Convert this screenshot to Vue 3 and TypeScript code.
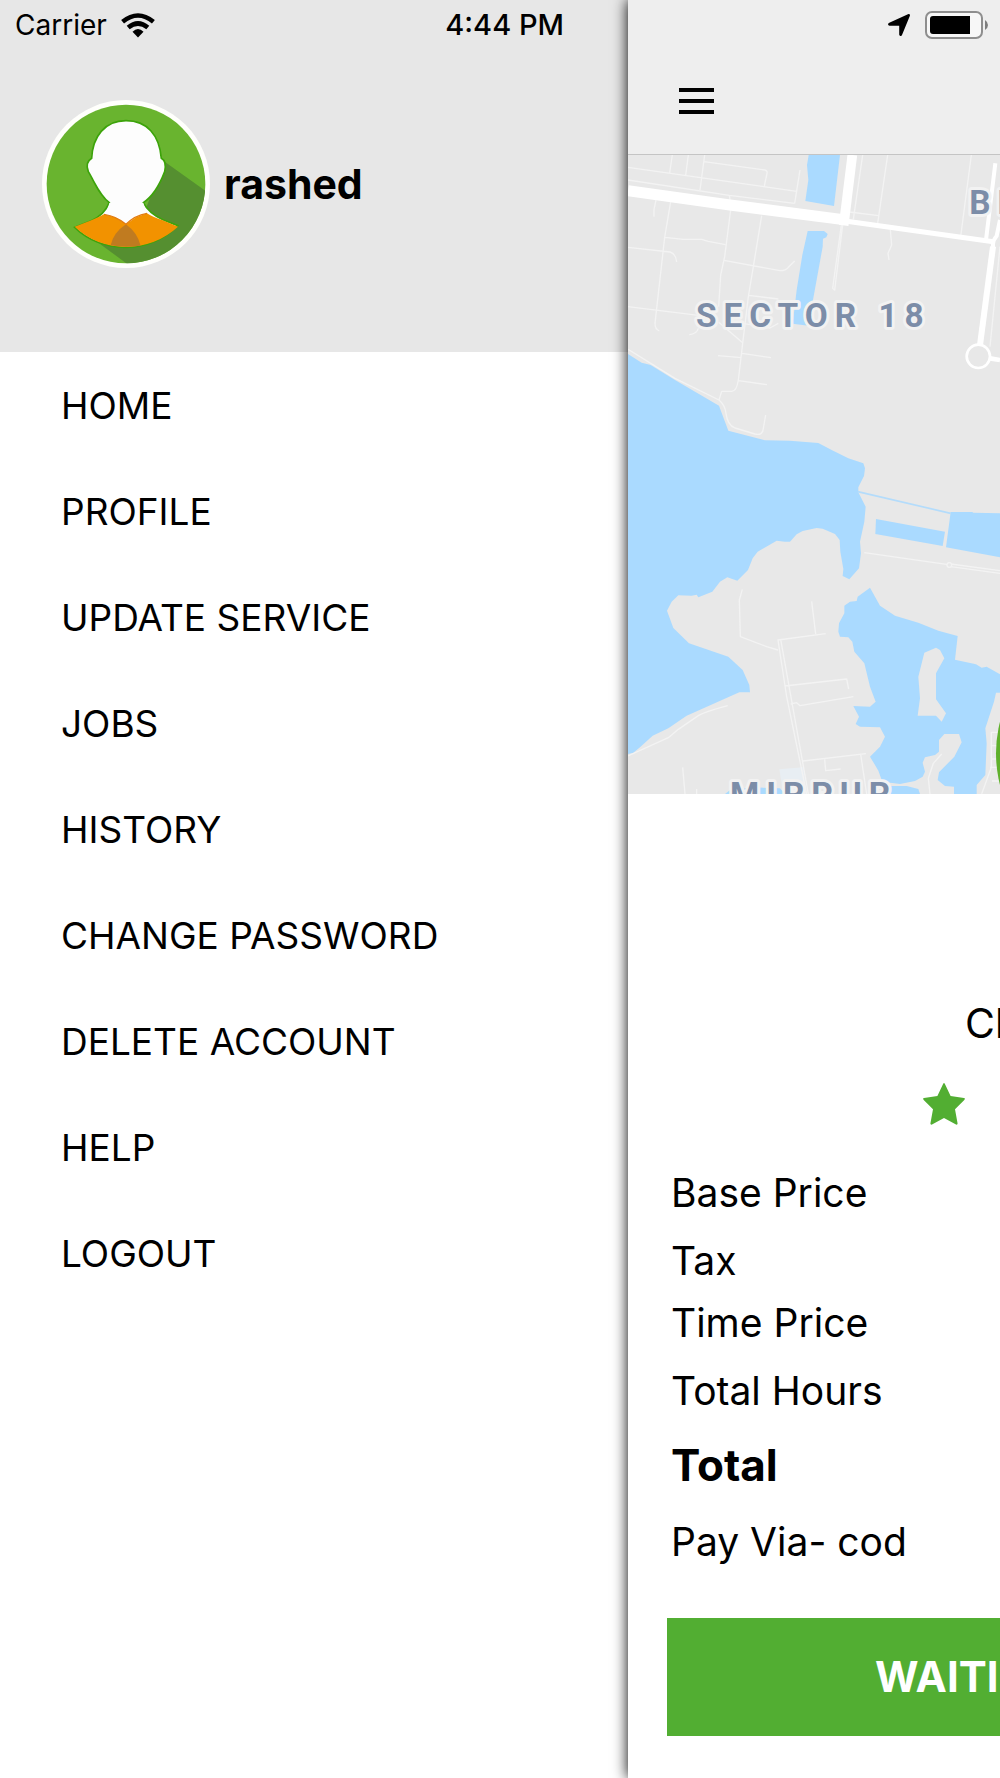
<script setup lang="ts">
interface MenuItem {
  label: string
  href: string
}

const menu: MenuItem[] = [
  { label: 'HOME', href: '#home' },
  { label: 'PROFILE', href: '#profile' },
  { label: 'UPDATE SERVICE', href: '#update-service' },
  { label: 'JOBS', href: '#jobs' },
  { label: 'HISTORY', href: '#history' },
  { label: 'CHANGE PASSWORD', href: '#change-password' },
  { label: 'DELETE ACCOUNT', href: '#delete-account' },
  { label: 'HELP', href: '#help' },
  { label: 'LOGOUT', href: '#logout' },
]

const priceGroups: string[][] = [
  ['Base Price', 'Tax'],
  ['Time Price', 'Total Hours'],
]

// Minor streets of the map, thin light strokes
const lanes: string[] = [
  'M24 52 530 124M24 90 328 136 524 160M540 60 524 160M252 35 435 60Q444 62 440 75L433 108M157 15 149 68M205 15 197 76M254 15 240 120M328 136 330 150',
  'M108 150 102 178V200M152 155 134 262 105 520Q105 538 118 543M24 292 150 306Q168 312 170 336M24 470 235 496M135 262 190 268H245L265 274 316 284M332 180 314 320 302 375 296 470',
  'M425 197 400 350 385 440 368 580 355 690Q350 724 335 724H305L297 750M312 331 480 362Q498 362 505 352L524 333M387 436 475 447M294 617 364 623M366 610 453 623M356 692 441 704',
  'M296 517 368 578M366 520 410 527 450 534 475 520M235 535Q230 552 208 554M24 598 165 685 297 750Q315 765 318 790 322 825 345 834L405 852Q428 858 430 835L437 795',
  'M728 15 700 208M803 15 773 220M688 186 776 197M1054 15 1022 260M811 240 815 285 804 310 807 330M664 225 638 415 644 420 668 225M1140 290 1110 590',
  'M733 1208 985 1244M992 1242 1140 1262M992 1250 1140 1270',
  'M367 1318 358 1350 361 1460 440 1490 474 1500M575 1354 587 1452M617 1451 474 1470 500 1640 560 1932M482 1468 565 1932M494 1608 680 1587 686 1617M512 1662 530 1658 540 1667 700 1640M549 1833 738 1811M614 1828 617 1862 662 1857M722 1813 740 1932M188 1852 195 1932M230 1917V1932',
  'M24 1818 145 1763 175 1738 235 1697Q255 1685 323 1667M965 1812 940 1840 925 1885 930 1932M1140 1747H1114V1852L1085 1932M1114 1787H1140M1110 1852H1140M1116 1893H1140M1114 1827H1140',
]
</script>

<template>
  <div class="screen">
    <aside class="drawer">
      <header class="drawer-head">
        <div class="status">
          <span class="carrier">Carrier</span>
          <svg class="wifi" viewBox="0 0 34 25" aria-hidden="true">
            <g fill="none" stroke="#000" stroke-width="4.6">
              <path d="M1.600 8.700Q17-3.700 32.400 8.700" />
              <path d="M7.200 14.600Q17 6.400 26.800 14.600" />
            </g>
            <path d="M11.500 18.800Q17 13.200 22.500 18.800L17 24.500Z" />
          </svg>
          <time class="clock">4:44 PM</time>
        </div>
        <div class="user">
          <svg class="avatar" viewBox="0 0 504 504" role="img" aria-label="Profile photo">
            <defs>
              <clipPath id="disc"><circle cx="252" cy="252" r="238" /></clipPath>
            </defs>
            <circle cx="252" cy="252" r="252" fill="#fffffc" />
            <g clip-path="url(#disc)">
              <rect width="504" height="504" fill="#69b42f" />
              <path d="M366 184 504 282V504H272L165 425 310 330Z" fill="#558f30" />
              <path
                d="M252 62C315 62 352 105 358 175Q375 184 368 215C350 263 331 290 304 308Q320 340 364 360L407 377Q345 440 252 442 158 440 98 382L148 362Q186 346 202 308C172 285 160 250 139 215Q128 188 149 175C152 110 188 62 252 62Z"
                fill="#fdfdfd" stroke="#3ca30a" stroke-width="5"
              />
              <path d="M98 380 148 361Q172 351 186 343L222 352 252 373 282 352 315 340Q330 350 362 361L408 380Q345 438 252 441 158 438 98 380Z" fill="#f29200" />
              <path d="M252 373Q286 398 296 437 250 444 206 436 214 398 252 373Z" fill="#c07b20" />
              <path d="M186 343Q225 349 252 373 278 346 315 340L360 300H140Z" fill="#fdfdfd" clip-path="url(#neck)" />
              <clipPath id="neck"><path d="M202 308H304Q308 324 315 340L252 373 186 343Q198 330 202 308Z" /></clipPath>
              <path d="M186 343Q225 349 252 373 278 346 315 340" fill="none" stroke="#e27b10" stroke-width="4" />
            </g>
          </svg>
          <strong class="name">rashed</strong>
        </div>
      </header>
      <nav>
        <ul class="menu">
          <li v-for="item in menu" :key="item.label">
            <a :href="item.href">{{ item.label }}</a>
          </li>
        </ul>
      </nav>
    </aside>

    <main class="page">
      <header class="topbar">
        <div class="indicators">
          <svg class="locate" viewBox="0 0 22 22" aria-hidden="true">
            <path d="M20.500.1Q22.300-.1 21.900 1.800L14 21Q13.200 22.500 12 21.800 11.200 21.400 11.200 20.500V11.800H1.500Q.1 11.600 0 10.300 0 9.300 1.300 8.800Z" />
          </svg>
          <svg class="battery" viewBox="0 0 64 28" aria-hidden="true">
            <rect x="1" y="1" width="56" height="26" rx="6" fill="#f7f7f7" stroke="#8e8e8e" stroke-width="2" />
            <path d="M8 5H45V23H8Q5 23 5 20V8Q5 5 8 5Z" />
            <path d="M60 9Q63 11 63 14T60 19Z" fill="#7d7d7d" />
          </svg>
        </div>
        <button class="burger" type="button" aria-label="Menu">
          <i></i><i></i><i></i>
        </button>
      </header>

      <svg class="map" viewBox="24 15 1116 1917" preserveAspectRatio="xMinYMin slice" role="img" aria-label="Map">
        <rect x="24" y="15" width="3000" height="1917" fill="#e8e8e8" />
        <g fill="#aadaff">
          <path d="M566 15H660L642 168 556 153 565 90 561 45Z" />
          <path d="M563 243H612L623 252 619 262 609 266 608 290 565 527 518 521 530 420 547 315Z" />
          <path d="M24 612 65 638 92 645 165 690 297 767 325 842 435 871 510 872 595 879 635 900 685 925 730 940 735 955 732 978 715 1012V1027L737 1070 733 1115 720 1175 723 1210 717 1255 688 1288 668 1278 670 1257 661 1205 659 1170 645 1152 608 1136 590 1134 548 1143 530 1153 510 1175H495L470 1172 413 1205 398 1225 384 1260 352 1292 322 1282 300 1295 277 1325 235 1342 230 1334 215 1337 175 1336 155 1355 141 1382 160 1434 207 1480 325 1520 368 1560 388 1605 390 1627H358L200 1697 145 1735 98 1757 60 1792 40 1808 24 1812Z" />
          <path d="M768 1107 975 1145 968 1188 766 1152ZM992 1086H1057L1060 1088 1140 1090V1222L978 1192Z" />
          <path d="M750 1313 780 1367 825 1397 895 1418 955 1442 1013 1458 1005 1529 1068 1543 1085 1553 1100 1550 1140 1573V1628H1128L1122 1655 1096 1735 1100 1780 1096 1875 1070 1905V1932H1002V1910L975 1908 953 1890 957 1867 1003 1820 1025 1777 1017 1752H973L957 1770V1805L945 1815 915 1822 908 1838 915 1865 908 1880 885 1893 840 1902 787 1895 775 1862 765 1845 750 1820 780 1790 795 1760 780 1732 720 1730 707 1722 717 1700 700 1668 750 1670 767 1655 750 1610 733 1540 703 1505 697 1475 685 1462 660 1460 655 1445 657 1420 673 1390V1367L690 1355 710 1353 713 1340Z" />
          <path d="M785 1932 805 1908H860L895 1917 900 1932ZM315 1932 330 1920 400 1912 480 1915 495 1932Z" />
        </g>
        <path d="M913 1508 948 1493 960 1500 973 1525 948 1570V1648L978 1690 965 1715 948 1697H893L900 1645 895 1580Z" fill="#e8e8e8" />
        <path d="M478 1858 550 1852 558 1932H490Z" fill="#e8eef3" />
        <path d="M713 1025 992 1090" stroke="#b4dcfb" stroke-width="5" />
        <g fill="none" stroke="#f3f3f3" stroke-width="4" stroke-linejoin="round">
          <path v-for="lane in lanes" :key="lane" :d="lane" />
          <circle cx="988" cy="1245" r="7" fill="#e8e8e8" />
        </g>
        <g fill="none" stroke="#fff" stroke-linejoin="round">
          <path d="M24 122 330 165 670 209" stroke-width="33" />
          <path d="M697 15 671 226" stroke-width="29" />
          <path d="M675 213 1120 275" stroke-width="15" />
          <path d="M1126 40 1098 270M1140 210 1130 258Q1115 275 1120 292L1080 585" stroke-width="12" />
          <path d="M1119 290 1080 585" stroke-width="18" />
          <circle cx="1075" cy="619" r="35" stroke-width="8" />
          <path d="M1110 625 1140 630" stroke-width="14" />
        </g>
        <circle cx="1510" cy="1810" r="382" fill="#5fb02c" />
        <g class="place">
          <text x="228" y="532">SECTOR 18</text>
          <text x="1048" y="192">BL</text>
          <text x="330" y="1967">MIRPUR</text>
        </g>
      </svg>

      <section class="job">
        <h2 class="client">Ch</h2>
        <svg class="star" viewBox="0 0 42 42" role="img" aria-label="Rating star">
          <path d="M20.200.800Q21-.6 21.800.800L27.600 13 41 15Q42.600 15.500 41.300 17L32 26.200 34.600 40.500Q34.600 42 33 41.500L21 35 9 41.500Q7.400 42 7.400 40.500L10 26.200.700 17Q-.6 15.500 1 15L14.400 13Z" fill="#52ae32" />
        </svg>
        <div class="prices">
          <ul v-for="(group, i) in priceGroups" :key="i" class="group">
            <li v-for="label in group" :key="label">{{ label }}</li>
          </ul>
        </div>
        <strong class="total">Total</strong>
        <p class="pay">Pay Via- cod</p>
        <button class="waiting" type="button">WAITI</button>
      </section>
    </main>
  </div>
</template>

<style>
body {
  margin: 0;
  background: #fff;
}
</style>

<style scoped>
.screen {
  display: grid;
  grid-template-columns: 157fr 93fr;
  min-height: 100vh;
  overflow: hidden;
  color: #000;
  font-family: Inter, "Liberation Sans", sans-serif;
  font-size: 39px;
  line-height: 48px;
}

ul {
  margin: 0;
  padding: 0;
  list-style: none;
}

svg {
  display: block;
}

.drawer {
  min-width: 0;
  background: #fff;
}

.drawer-head {
  box-sizing: border-box;
  height: 352px;
  background: #e7e7e7;
}

.status {
  display: flex;
  align-items: center;
  height: 50px;
  padding: 0 64px 0 15px;
  font-size: 28px;
}

.wifi {
  width: 34px;
  height: 25px;
  margin-left: 14px;
}

.clock {
  margin-left: auto;
  font-size: 29px;
  font-weight: 500;
}

.user {
  display: flex;
  align-items: center;
  gap: 14px;
  padding: 50px 42px 0;
}

.avatar {
  width: 168px;
  height: 168px;
}

.name {
  font-size: 41px;
  font-weight: 700;
}

.menu {
  padding-top: 1px;
}

.menu a {
  display: flex;
  align-items: center;
  height: 106px;
  padding-left: 61px;
  color: inherit;
  font-size: 37px;
  text-decoration: none;
}

.page {
  min-width: 0;
  background: #fff;
  box-shadow: 0 0 14px #000;
  white-space: nowrap;
  clip-path: inset(0 0 0 -20px);
}

.topbar {
  box-sizing: border-box;
  height: 155px;
  border-bottom: 1px solid #c4c4c4;
  background: #eee;
}

.indicators {
  display: flex;
  justify-content: flex-end;
  align-items: center;
  gap: 15px;
  height: 50px;
  padding-right: 11px;
}

.locate {
  width: 22px;
  height: 22px;
}

.battery {
  width: 64px;
  height: 28px;
}

.burger {
  display: flex;
  flex-direction: column;
  gap: 7px;
  margin: 38px 0 0 51px;
  padding: 0;
  border: 0;
  background: none;
}

.burger i {
  width: 35px;
  height: 4px;
  background: #000;
}

.map {
  width: 100%;
  height: 639px;
}

.place {
  fill: #7c8da8;
  stroke: #f2f2f2;
  stroke-width: 18px;
  stroke-linejoin: round;
  paint-order: stroke;
  font-family: Roboto, sans-serif;
  font-size: 100px;
  font-weight: 700;
  letter-spacing: 21px;
}

.job {
  padding: 205px 0 40px 39px;
}

.client {
  margin: 0 0 36px 298px;
  font-size: 41px;
  font-weight: 400;
}

.star {
  width: 42px;
  height: 42px;
  margin-left: 256px;
}

.prices {
  display: flex;
  flex-direction: column;
  gap: 14px;
  margin-top: 44px;
}

.group {
  display: flex;
  flex-direction: column;
  gap: 20px;
}

.group,
.total,
.pay {
  padding-left: 4px;
}

.total {
  display: block;
  margin-top: 26px;
  font-size: 44px;
}

.pay {
  margin: 29px 0 52px;
}

.waiting {
  display: block;
  width: 100%;
  height: 118px;
  padding: 0 0 0 208px;
  border: 0;
  background: #52ae32;
  color: #fff;
  font: inherit;
  font-size: 42px;
  font-weight: 700;
  text-align: left;
}
</style>
